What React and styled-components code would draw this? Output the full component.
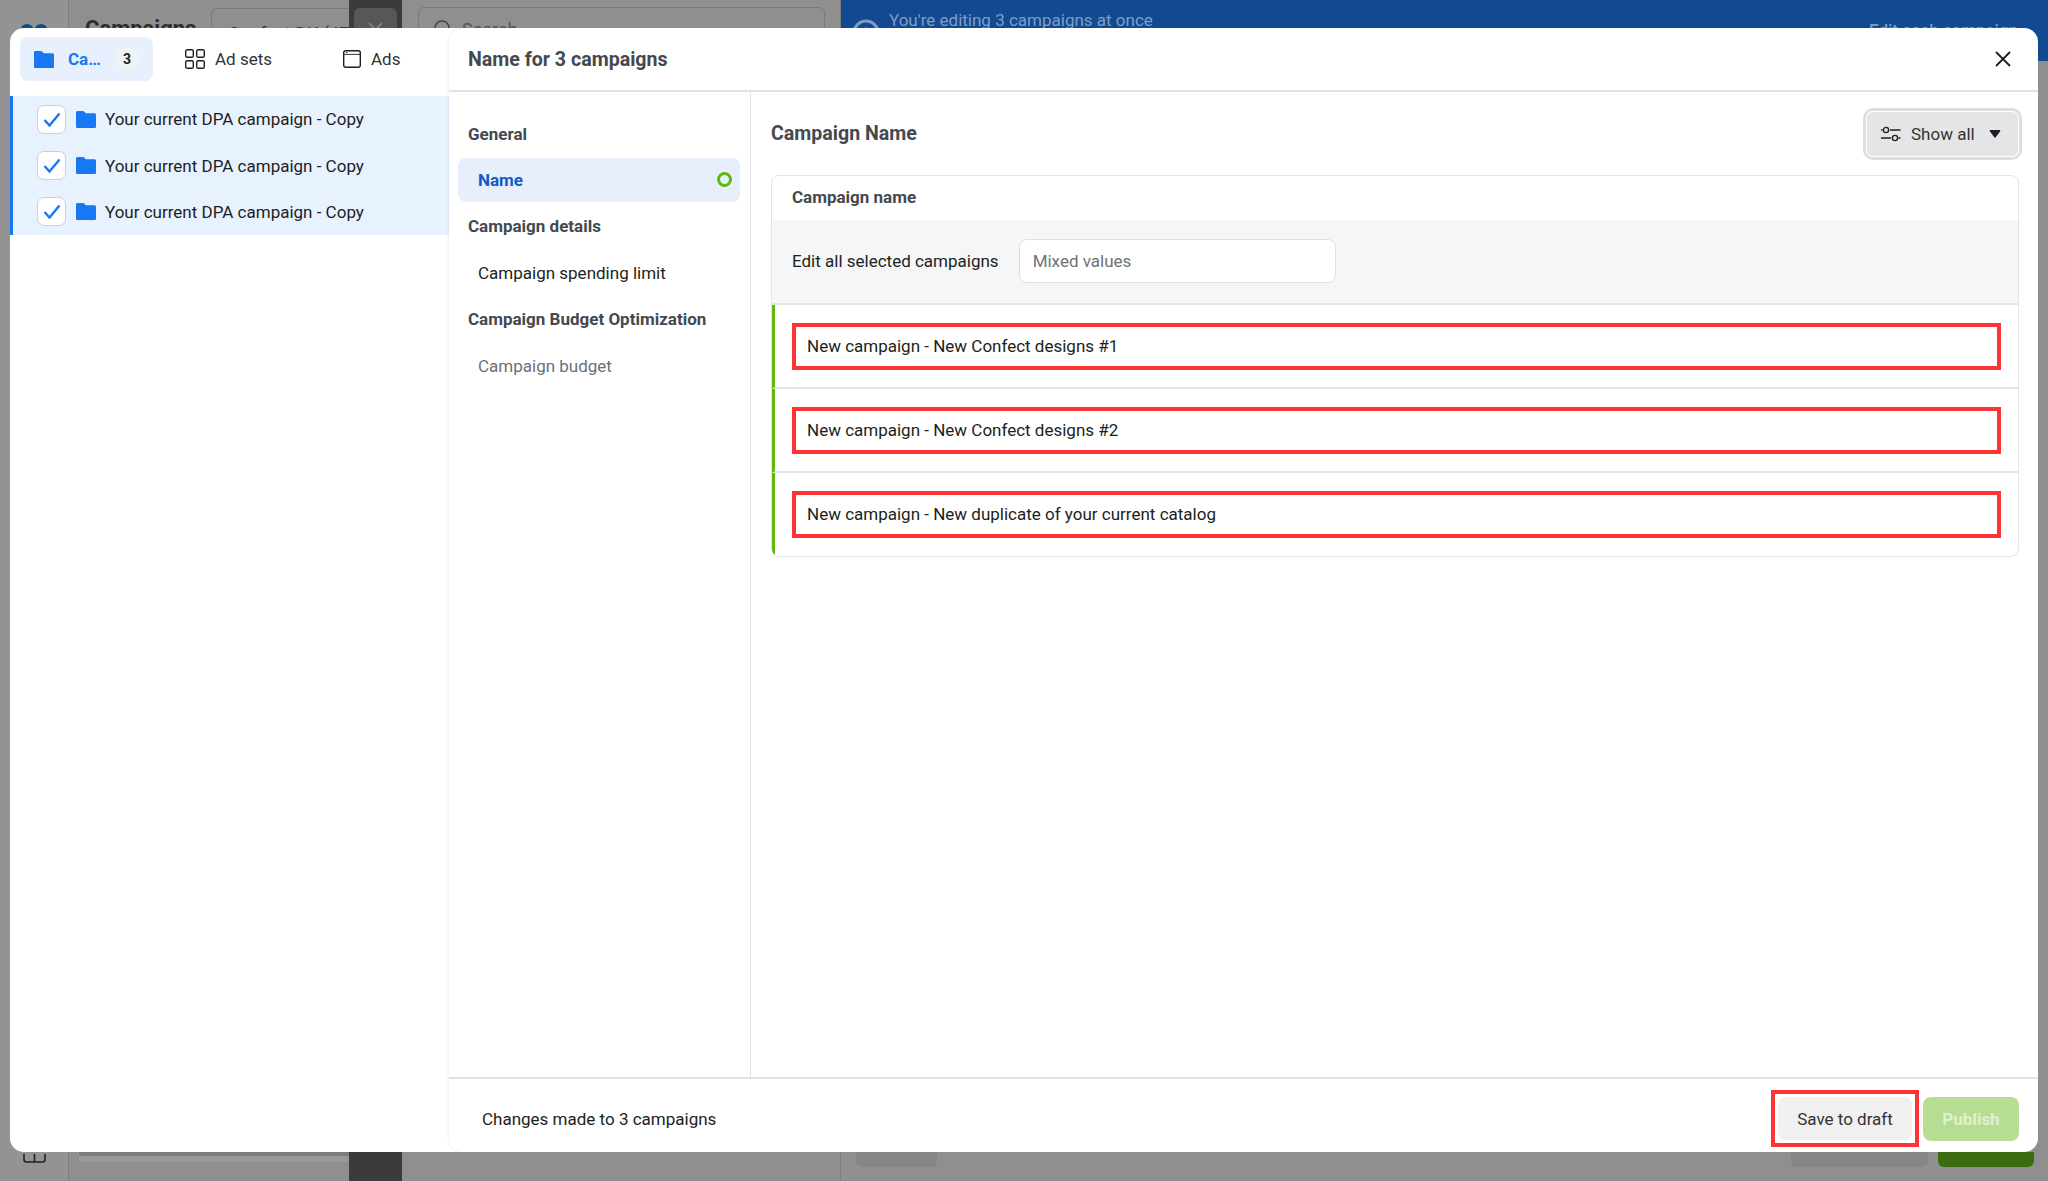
import React from "react";
import styled, { createGlobalStyle } from "styled-components";

const Global = createGlobalStyle`
  html, body { margin: 0; padding: 0; height: 100%; overflow: hidden; }
  body { font-family: Roboto, "Liberation Sans", sans-serif; color: #1c1e21; background: #8f8f8f; }
  * { box-sizing: border-box; }
`;

const Page = styled.div`
  position: relative;
  width: 2048px;
  height: 1181px;
  overflow: hidden;
  background: #8f8f8f;
  display: grid;
  grid-template-columns: 69px 280px 53px 439px 1fr;
`;

/* Dimmed page behind the dialog */
const Rail = styled.div`
  border-right: 1px solid #7c7c7c;
  padding: 21px 0 0 20px;
  position: relative;
  background: #939393;
`;
const RailFoot = styled.div`
  position: absolute;
  left: 23px;
  bottom: 18px;
  color: #222;
  display: flex;
`;
const HeadCol = styled.div`
  display: flex;
  flex-direction: column;
  justify-content: space-between;
`;
const HeadTop = styled.div`
  display: flex;
  align-items: flex-start;
  height: 60px;
  padding-top: 8px;
  gap: 18px;
`;
const PageTitle = styled.div`
  width: 124px;
  padding: 8px 0 0 16px;
  font-size: 22px;
  font-weight: 700;
  color: #2c2c2c;
  white-space: nowrap;
`;
const Picker = styled.div`
  flex: 1;
  height: 52px;
  border: 1px solid #7a7a7a;
  border-right: 0;
  border-radius: 6px 0 0 6px;
  padding: 14px 0 0 16px;
  font-size: 18px;
  color: #333;
  white-space: nowrap;
  overflow: hidden;
`;
const FootInput = styled.div`
  height: 29px;
  margin: 0 0 19px 9px;
  background: #7c7c7c;
  border: 1px solid #999;
  border-top: 0;
  border-right: 0;
  border-bottom-width: 6px;
  border-radius: 0 0 0 6px;
`;
const DarkStrip = styled.div`
  background: #3b3b3b;
  padding: 8px 5px 0;
`;
const DarkButton = styled.div`
  height: 44px;
  background: #575757;
  border-radius: 6px;
  color: #8a8a8a;
  display: flex;
  justify-content: center;
  padding-top: 14px;
`;
const SearchCol = styled.div`
  padding: 7px 15px 0 16px;
  border-right: 1px solid #7c7c7c;
`;
const SearchBox = styled.div`
  height: 50px;
  border: 1px solid #7a7a7a;
  border-radius: 6px;
  display: flex;
  align-items: flex-start;
  gap: 9px;
  padding: 11px 0 0 14px;
  font-size: 18px;
  color: #555;
`;
const RightCol = styled.div`
  display: flex;
  flex-direction: column;
  justify-content: space-between;
`;
const Banner = styled.div`
  height: 61px;
  background: #124a92;
  color: #7f9cc4;
  display: flex;
  justify-content: space-between;
  padding: 10px 30px 0 11px;
  font-size: 17px;
`;
const BannerLead = styled.div`
  display: flex;
  gap: 9px;
`;
const BannerLink = styled.div`
  padding-top: 10px;
  font-weight: 500;
`;
const BackFoot = styled.div`
  display: flex;
  height: 29px;
  padding: 0 14px 14px 15px;
  justify-content: space-between;
`;
const GhostBtn = styled.div`
  width: ${p => p.$w}px;
  background: ${p => p.$bg};
  border-radius: 0 0 6px 6px;
`;
const BackFootRight = styled.div`
  display: flex;
  gap: 10px;
`;

/* Dialog */
const Modal = styled.div`
  position: absolute;
  left: 10px;
  top: 28px;
  width: 2028px;
  height: 1124px;
  background: #fff;
  border-radius: 14px;
  display: grid;
  grid-template-columns: 439px 1fr;
  overflow: hidden;
`;
const Side = styled.aside`
  display: flex;
  flex-direction: column;
  padding-top: 9px;
`;
const Tabs = styled.div`
  display: flex;
  padding-left: 10px;
  height: 59px;
  align-items: flex-start;
`;
const Tab = styled.div`
  height: 44px;
  flex: none;
  width: ${p => p.$w}px;
  padding-left: ${p => p.$pl}px;
  display: flex;
  align-items: center;
  gap: 10px;
  border-radius: 8px;
  font-size: 17px;
  white-space: nowrap;
  color: #333;
  background: ${p => (p.$active ? "#e7f0fc" : "transparent")};
`;
const TabLabel = styled.span`
  color: #1877f2;
  font-weight: 700;
  font-size: 17px;
  width: 37px;
  margin-left: 4px;
`;
const Badge = styled.span`
  width: 24px;
  height: 24px;
  border-radius: 50%;
  background: #f0f2f3;
  color: #1c1e21;
  font-size: 14px;
  font-weight: 700;
  display: flex;
  align-items: center;
  justify-content: center;
`;
const RowGroup = styled.div`
  background: #e8f2fe;
  border-left: 3px solid #1877f2;
`;
const CampaignRow = styled.div`
  height: 46.4px;
  display: flex;
  align-items: center;
  padding-left: 24px;
  font-size: 17px;
  color: #1c1e21;
`;
const Check = styled.span`
  width: 29px;
  height: 29px;
  background: #fff;
  border: 1px solid #ccd0d5;
  border-radius: 7px;
  display: flex;
  align-items: center;
  justify-content: center;
  margin-right: 10px;
  color: #1877f2;
`;
const RowFolder = styled.span`
  display: flex;
  margin-right: 9px;
`;
const Main = styled.section`
  display: flex;
  flex-direction: column;
  border-radius: 14px 0 0 14px;
  box-shadow: 0 0 3px rgba(0, 0, 0, 0.12);
  min-width: 0;
`;
const TopBar = styled.header`
  height: 64px;
  flex: none;
  border-bottom: 2px solid #e0e2e4;
  display: flex;
  align-items: center;
  justify-content: space-between;
  padding: 0 27px 0 19px;
`;
const DialogTitle = styled.h1`
  margin: 0;
  font-size: 19.6px;
  font-weight: 700;
  color: #444950;
`;
const CloseBtn = styled.span`
  display: flex;
  color: #1c1e21;
`;
const Body = styled.div`
  flex: 1;
  display: grid;
  grid-template-columns: 302px 1fr;
  min-height: 0;
`;
const Nav = styled.nav`
  border-right: 1px solid #dfe1e3;
  padding: 18px 10px 0 9px;
`;
const NavHeading = styled.div`
  height: 46.4px;
  display: flex;
  align-items: center;
  padding: 1px 0 0 10px;
  font-size: 17px;
  font-weight: 700;
  color: #444950;
`;
const NavItem = styled.div`
  height: 44px;
  margin: 1.2px 0;
  padding: ${p => (p.$active ? 0 : 1)}px 8px 0 20px;
  display: flex;
  align-items: center;
  justify-content: space-between;
  font-size: 17px;
  border-radius: 8px;
  font-weight: ${p => (p.$active ? 700 : 400)};
  color: ${p => (p.$active ? "#1559c5" : p.$muted ? "#6b7075" : "#1c1e21")};
  background: ${p => (p.$active ? "#e7effc" : "transparent")};
`;
const Ring = styled.span`
  width: 15px;
  height: 15px;
  border-radius: 50%;
  border: 3px solid #63b80d;
`;
const Content = styled.div`
  padding: 0 19px 0 20px;
`;
const ContentHead = styled.div`
  height: 83px;
  display: flex;
  align-items: center;
  justify-content: space-between;
`;
const ContentTitle = styled.h2`
  margin: 0;
  font-size: 19.6px;
  font-weight: 700;
  color: #444950;
`;
const ShowAll = styled.div`
  width: 159px;
  height: 52px;
  margin-right: -3px;
  border: 3px solid #dedfe0;
  border-radius: 10px;
  padding: 1px;
  background: #fff;
`;
const ShowAllInner = styled.div`
  height: 100%;
  background: #e4e5e6;
  border-radius: 6px;
  display: flex;
  align-items: center;
  padding-left: 14px;
  font-size: 17px;
  color: #333;
`;
const Caret = styled.span`
  display: flex;
  margin-left: 14px;
`;
const ShowLabel = styled.span`
  margin-left: 10px;
`;
const Card = styled.div`
  border: 1.5px solid #e2e4e6;
  border-radius: 8px;
  overflow: hidden;
`;
const CardHead = styled.div`
  height: 44px;
  display: flex;
  align-items: center;
  padding: 0 0 2px 20px;
  font-size: 17px;
  font-weight: 700;
  color: #444950;
`;
const Bulk = styled.div`
  height: 85px;
  background: #f5f6f7;
  border-bottom: 2px solid #e2e4e6;
  display: flex;
  align-items: center;
  padding: 0 0 1px 20px;
  font-size: 17px;
  color: #1c1e21;
`;
const BulkInput = styled.div`
  width: 317px;
  height: 44px;
  margin-left: 20px;
  background: #fff;
  border: 1.5px solid #dfe1e3;
  border-radius: 8px;
  display: flex;
  align-items: center;
  padding-left: 13px;
  color: #6f7377;
`;
const NameRow = styled.div`
  height: ${p => (p.$last ? 82.5 : 84)}px;
  border-left: 3px solid #63b80d;
  border-bottom: ${p => (p.$last ? "0" : "2px solid #e2e4e6")};
  padding: 18px 17px 0 17px;
`;
const NameField = styled.div`
  height: 47px;
  border: 4px solid #ff3333;
  display: flex;
  align-items: center;
  padding: 0 0 1px 11px;
  font-size: 17px;
  color: #1c1e21;
`;
const Footer = styled.footer`
  height: 75px;
  flex: none;
  border-top: 2px solid #e0e2e4;
  padding: 6px 19px 0 33px;
  display: flex;
  align-items: center;
  justify-content: space-between;
  font-size: 17px;
`;
const Actions = styled.div`
  display: flex;
  align-items: center;
  gap: 4px;
`;
const Highlight = styled.div`
  border: 4px solid #ff3333;
  padding: 3px;
  width: 148px;
  height: 57px;
`;
const DraftBtn = styled.div`
  height: 100%;
  background: #f0f0f0;
  border-radius: 8px;
  display: flex;
  align-items: center;
  justify-content: center;
  color: #333;
`;
const PublishBtn = styled.div`
  width: 96px;
  height: 44px;
  background: #b5de93;
  border-radius: 8px;
  display: flex;
  align-items: center;
  justify-content: center;
  color: #dff0d0;
  font-weight: 700;
`;

const Folder = () => (
  <svg width="20" height="17" viewBox="0 0 20 17" fill="#1877f2">
    <path d="M1.6 0h5.2c.6 0 1 .2 1.4.6L9.8 2.2h8.6c.9 0 1.6.7 1.6 1.6v11.6c0 .9-.7 1.6-1.6 1.6H1.6C.7 17 0 16.3 0 15.4V1.6C0 .7.7 0 1.6 0z" />
  </svg>
);
const Grid4 = () => (
  <svg width="20" height="20" viewBox="0 0 20 20" fill="none" stroke="#1c1e21" strokeWidth="1.4">
    <rect x=".7" y=".7" width="7.6" height="7.6" rx="1.6" />
    <rect x="11.7" y=".7" width="7.6" height="7.6" rx="1.6" />
    <rect x=".7" y="11.7" width="7.6" height="7.6" rx="1.6" />
    <rect x="11.7" y="11.7" width="7.6" height="7.6" rx="1.6" />
  </svg>
);
const AdIcon = () => (
  <svg width="18" height="18" viewBox="0 0 18 18" fill="none" stroke="#1c1e21" strokeWidth="1.4">
    <rect x=".7" y=".7" width="16.6" height="16.6" rx="2" />
    <path d="M.7 4.4h16.6" strokeWidth=".9" />
    <path d="M3 2.6h1.4" strokeWidth="1" />
  </svg>
);
const Tick = () => (
  <svg width="18" height="15" viewBox="0 0 18 15" fill="none" stroke="#1877f2" strokeWidth="2.4">
    <path d="M1.5 8l5 5.5L16.5 1.5" />
  </svg>
);
const Cross = ({ size = 16, sw = 1.8 }) => (
  <svg width={size} height={size} viewBox="0 0 16 16" fill="none" stroke="currentColor" strokeWidth={sw}>
    <path d="M1 1l14 14M15 1L1 15" />
  </svg>
);
const Sliders = () => (
  <svg width="20" height="16" viewBox="0 0 20 16" fill="none" stroke="#1c1e21" strokeWidth="1.4">
    <path d="M0 4h1.5M9 4h10.5M0 12h10M17.5 12h2" />
    <circle cx="5" cy="4" r="2.6" />
    <circle cx="14" cy="12" r="2.6" />
  </svg>
);
const Triangle = () => (
  <svg width="12" height="8" viewBox="0 0 12 8" fill="#1c1e21">
    <path d="M.8 1.2C.5.6.9 0 1.5 0h9c.6 0 1 .6.7 1.2L6.7 7.3c-.3.5-1.1.5-1.4 0z" />
  </svg>
);
const Magnifier = () => (
  <svg width="20" height="20" viewBox="0 0 20 20" fill="none" stroke="#444" strokeWidth="1.6">
    <circle cx="9" cy="9" r="7" />
    <path d="M14 14l5 5" />
  </svg>
);
const Logo = () => (
  <svg width="28" height="14" viewBox="0 0 28 14" fill="#124a92">
    <ellipse cx="7" cy="8" rx="6.5" ry="6" />
    <ellipse cx="21" cy="8" rx="6.5" ry="6" />
  </svg>
);
const PanelGlyph = () => (
  <svg width="23" height="9" viewBox="0 0 23 9" fill="none" stroke="#222" strokeWidth="1.6">
    <path d="M1 0v5.5C1 7 2 8 3.5 8h16C21 8 22 7 22 5.5V0M11.5 0v8" />
  </svg>
);
const InfoRing = () => (
  <svg width="28" height="28" viewBox="0 0 28 28" fill="none" stroke="#7f9cc4" strokeWidth="3" style={{ marginTop: 9 }}>
    <circle cx="14" cy="14" r="12" />
    <circle cx="14" cy="14" r="4" />
  </svg>
);

const rows = ["Your current DPA campaign - Copy", "Your current DPA campaign - Copy", "Your current DPA campaign - Copy"];
const names = [
  "New campaign - New Confect designs #1",
  "New campaign - New Confect designs #2",
  "New campaign - New duplicate of your current catalog",
];

export default function App() {
  return (
    <Page>
      <Global />
      <Rail>
        <Logo />
        <RailFoot>
          <PanelGlyph />
        </RailFoot>
      </Rail>
      <HeadCol>
        <HeadTop>
          <PageTitle>Campaigns</PageTitle>
          <Picker>Confect DK (479</Picker>
        </HeadTop>
        <FootInput />
      </HeadCol>
      <DarkStrip>
        <DarkButton>
          <Cross size={15} sw={1.6} />
        </DarkButton>
      </DarkStrip>
      <SearchCol>
        <SearchBox>
          <Magnifier />
          Search
        </SearchBox>
      </SearchCol>
      <RightCol>
        <Banner>
          <BannerLead>
            <InfoRing />
            <span>You're editing 3 campaigns at once</span>
          </BannerLead>
          <BannerLink>Edit each campaign</BannerLink>
        </Banner>
        <BackFoot>
          <GhostBtn $w={81} $bg="#868686" />
          <BackFootRight>
            <GhostBtn $w={137} $bg="#868686" />
            <GhostBtn $w={96} $bg="#3d6b10" />
          </BackFootRight>
        </BackFoot>
      </RightCol>

      <Modal>
        <Side>
          <Tabs>
            <Tab $active $w={133} $pl={14}>
              <Folder />
              <TabLabel>Ca…</TabLabel>
              <Badge>3</Badge>
            </Tab>
            <Tab $w={150} $pl={32}>
              <Grid4 />
              Ad sets
            </Tab>
            <Tab $w={100} $pl={40}>
              <AdIcon />
              Ads
            </Tab>
          </Tabs>
          <RowGroup>
            {rows.map((r, i) => (
              <CampaignRow key={i}>
                <Check>
                  <Tick />
                </Check>
                <RowFolder>
                  <Folder />
                </RowFolder>
                {r}
              </CampaignRow>
            ))}
          </RowGroup>
        </Side>
        <Main>
          <TopBar>
            <DialogTitle>Name for 3 campaigns</DialogTitle>
            <CloseBtn>
              <Cross />
            </CloseBtn>
          </TopBar>
          <Body>
            <Nav>
              <NavHeading>General</NavHeading>
              <NavItem $active>
                Name
                <Ring />
              </NavItem>
              <NavHeading>Campaign details</NavHeading>
              <NavItem>Campaign spending limit</NavItem>
              <NavHeading>Campaign Budget Optimization</NavHeading>
              <NavItem $muted>Campaign budget</NavItem>
            </Nav>
            <Content>
              <ContentHead>
                <ContentTitle>Campaign Name</ContentTitle>
                <ShowAll>
                  <ShowAllInner>
                    <Sliders />
                    <ShowLabel>Show all</ShowLabel>
                    <Caret>
                      <Triangle />
                    </Caret>
                  </ShowAllInner>
                </ShowAll>
              </ContentHead>
              <Card>
                <CardHead>Campaign name</CardHead>
                <Bulk>
                  Edit all selected campaigns
                  <BulkInput>Mixed values</BulkInput>
                </Bulk>
                {names.map((n, i) => (
                  <NameRow key={n} $last={i === names.length - 1}>
                    <NameField>{n}</NameField>
                  </NameRow>
                ))}
              </Card>
            </Content>
          </Body>
          <Footer>
            Changes made to 3 campaigns
            <Actions>
              <Highlight>
                <DraftBtn>Save to draft</DraftBtn>
              </Highlight>
              <PublishBtn>Publish</PublishBtn>
            </Actions>
          </Footer>
        </Main>
      </Modal>
    </Page>
  );
}
